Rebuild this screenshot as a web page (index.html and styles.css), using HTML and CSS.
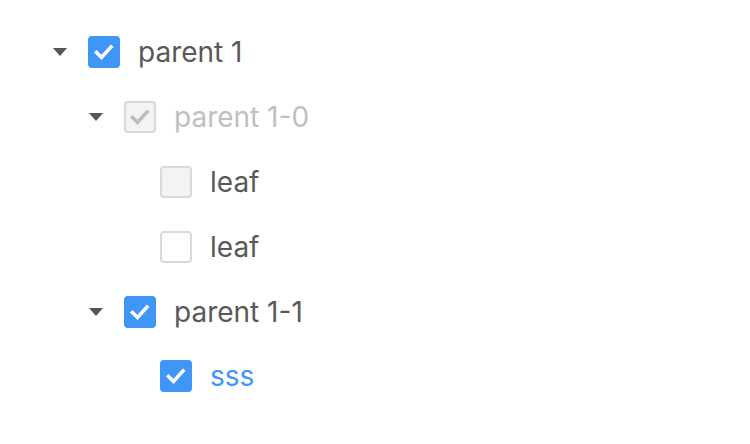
FILE: index.html
```html
<!DOCTYPE html>
<html>
<head>
<meta charset="utf-8">
<link rel="stylesheet" href="styles.css">
</head>
<body>
<div class="tree">
  <div class="row lvl0">
    <span class="switcher"><span class="caret"></span></span>
    <span class="cb checked"><svg viewBox="0 0 32 32"><path d="M8.5 16.5 L13.5 21.5 L23 11"/></svg></span>
    <span class="title">parent 1</span>
  </div>
  <div class="row lvl1">
    <span class="switcher"><span class="caret"></span></span>
    <span class="cb disabled-checked"><svg viewBox="0 0 32 32"><path d="M8.5 16.5 L13.5 21.5 L23 11"/></svg></span>
    <span class="title disabled">parent 1-0</span>
  </div>
  <div class="row lvl2">
    <span class="switcher"></span>
    <span class="cb disabled"></span>
    <span class="title">leaf</span>
  </div>
  <div class="row lvl2">
    <span class="switcher"></span>
    <span class="cb"></span>
    <span class="title">leaf</span>
  </div>
  <div class="row lvl1">
    <span class="switcher"><span class="caret"></span></span>
    <span class="cb checked"><svg viewBox="0 0 32 32"><path d="M8.5 16.5 L13.5 21.5 L23 11"/></svg></span>
    <span class="title">parent 1-1</span>
  </div>
  <div class="row lvl2">
    <span class="switcher"></span>
    <span class="cb checked"><svg viewBox="0 0 32 32"><path d="M8.5 16.5 L13.5 21.5 L23 11"/></svg></span>
    <span class="title selected">sss</span>
  </div>
</div>
</body>
</html>
```

FILE: styles.css
```css
html, body {
  margin: 0;
  padding: 0;
  background: #ffffff;
}
.tree {
  padding: 20px 0 0 36px;
  font-family: Inter, "Liberation Sans", Arial, sans-serif;
  font-size: 28px;
  color: #595959;
}
.row {
  display: flex;
  align-items: center;
  height: 64.8px;
}
.lvl1 { padding-left: 36px; }
.lvl2 { padding-left: 72px; }
.switcher {
  width: 48px;
  height: 32px;
  display: flex;
  align-items: center;
  justify-content: center;
  flex: none;
}
.caret {
  width: 0;
  height: 0;
  border-left: 7px solid transparent;
  border-right: 7px solid transparent;
  border-top: 8px solid #555555;
}
.cb {
  box-sizing: border-box;
  width: 32px;
  height: 32px;
  margin-left: 4px;
  border: 2px solid #d9d9d9;
  border-radius: 4px;
  background: #ffffff;
  flex: none;
  display: flex;
}
.cb svg {
  width: 32px;
  height: 32px;
  margin: -2px;
}
.cb path {
  fill: none;
  stroke: #ffffff;
  stroke-width: 3.6;
  stroke-linecap: square;
  stroke-linejoin: miter;
}
.cb.checked {
  background: #4096f7;
  border-color: #4096f7;
}
.cb.disabled {
  background: #f3f3f3;
}
.cb.disabled-checked {
  background: #f3f3f3;
}
.cb.disabled-checked path {
  stroke: #bdbdbd;
}
.title {
  margin-left: 18px;
  line-height: 1;
}
.title.disabled { color: #bfbfbf; }
.title.selected { color: #4096f7; }
```
